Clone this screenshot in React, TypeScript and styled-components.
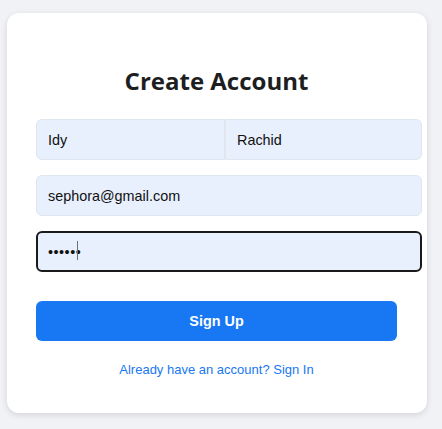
import React from "react";
import styled, { createGlobalStyle } from "styled-components";

const Global = createGlobalStyle`
  html, body { margin: 0; padding: 0; background: #f0f2f5; }
  body { font-family: "Liberation Sans", Arial, sans-serif; }
  * { box-sizing: border-box; }
`;

const Page = styled.div`
  min-height: 429px;
  padding: 13px 0 0 7px;
`;

const Card = styled.form`
  width: 420px;
  height: 400px;
  background: #ffffff;
  border-radius: 12px;
  box-shadow: 0 2px 6px rgba(0, 0, 0, 0.12);
  padding: 51px 30px 0 29px;
  display: flex;
  flex-direction: column;
`;

const Title = styled.h1`
  margin: 0 0 22px 0;
  font-family: "Open Sans", "Noto Sans", sans-serif;
  font-weight: 700;
  font-size: 24px;
  line-height: 33px;
  color: #1c1e21;
  text-align: center;
`;

const Fields = styled.div`
  display: flex;
  flex-direction: column;
  gap: 15px;
  width: 386px;
`;

const NameRow = styled.div`
  display: grid;
  grid-template-columns: 189px 197px;
`;

const Field = styled.div`
  position: relative;
`;

const Input = styled.input<{ $focused?: boolean; $side?: "left" | "right" }>`
  display: block;
  width: 100%;
  height: 41px;
  margin: 0;
  padding: 0 11px;
  font-family: "Liberation Sans", Arial, sans-serif;
  font-size: 14.4px;
  color: #111;
  background: #e8f0fe;
  border: ${(p) => (p.$focused ? "2px solid #1a1a1a" : "1px solid #dfe6f0")};
  border-radius: ${(p) =>
    p.$side === "left" ? "6px 0 0 6px" : p.$side === "right" ? "0 6px 6px 0" : "6px"};
  border-left-color: ${(p) => (p.$side === "right" ? "#e1e6ee" : undefined)};
  outline: none;
  ${(p) => (p.$focused ? "padding-left: 10px; letter-spacing: 0.5px;" : "")}
`;

const Caret = styled.span`
  position: absolute;
  left: 41px;
  top: 10px;
  width: 1px;
  height: 19px;
  background: #6b6f76;
`;

const Button = styled.button`
  margin-top: 29px;
  width: 361px;
  height: 40px;
  border: none;
  border-radius: 6px;
  background: #1877f2;
  color: #ffffff;
  font-family: "Liberation Sans", Arial, sans-serif;
  font-weight: 700;
  font-size: 14.4px;
  cursor: pointer;
`;

const Footer = styled.p`
  margin: 21px 0 0 0;
  width: 361px;
  text-align: center;
  font-family: "Liberation Sans", Arial, sans-serif;
  font-size: 13px;
  line-height: 15px;
`;

const Link = styled.a`
  color: #1877f2;
  text-decoration: none;
`;

export default function App() {
  return (
    <>
      <Global />
      <Page>
        <Card onSubmit={(e) => e.preventDefault()}>
          <Title>Create Account</Title>
          <Fields>
            <NameRow>
              <Input $side="left" defaultValue="Idy" />
              <Input $side="right" defaultValue="Rachid" />
            </NameRow>
            <Input type="email" defaultValue="sephora@gmail.com" />
            <Field>
              <Input $focused type="password" defaultValue="123456" />
              <Caret />
            </Field>
          </Fields>
          <Button type="submit">Sign Up</Button>
          <Footer>
            <Link href="#">Already have an account? Sign In</Link>
          </Footer>
        </Card>
      </Page>
    </>
  );
}
